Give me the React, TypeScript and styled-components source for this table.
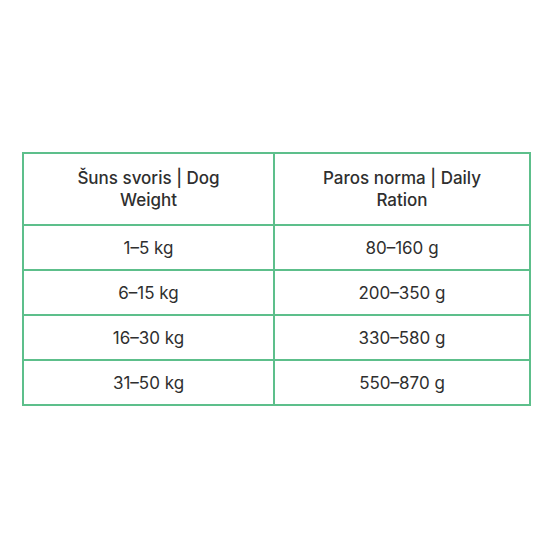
import React from "react";
import styled, { createGlobalStyle } from "styled-components";

const Global = createGlobalStyle`
  html, body { margin: 0; padding: 0; background: #ffffff; }
  body { font-family: Inter, "Noto Sans", sans-serif; color: #2f2f2f; }
`;

const Page = styled.div`
  width: 550px;
  height: 550px;
  box-sizing: border-box;
  padding: 152px 19px 0 22px;
`;

const Table = styled.table`
  width: 509px;
  border-collapse: collapse;
  table-layout: fixed;
  border: 2px solid #5dbf8b;
`;

const HeadCell = styled.th`
  border: 2px solid #5dbf8b;
  padding: 13px 40px;
  font-size: 17px;
  line-height: 22px;
  font-weight: 500;
  text-align: center;
  color: #2f2f2f;
`;

const Cell = styled.td`
  border: 2px solid #5dbf8b;
  padding: 10.5px 20px;
  font-size: 17px;
  line-height: 22px;
  font-weight: 400;
  text-align: center;
  color: #2f2f2f;
`;

const rows = [
  ["1–5 kg", "80–160 g"],
  ["6–15 kg", "200–350 g"],
  ["16–30 kg", "330–580 g"],
  ["31–50 kg", "550–870 g"],
];

export default function App() {
  return (
    <>
      <Global />
      <Page>
        <Table>
          <colgroup>
            <col style={{ width: "251px" }} />
            <col />
          </colgroup>
          <thead>
            <tr>
              <HeadCell>Šuns svoris | Dog Weight</HeadCell>
              <HeadCell>Paros norma | Daily Ration</HeadCell>
            </tr>
          </thead>
          <tbody>
            {rows.map(([w, r]) => (
              <tr key={w}>
                <Cell>{w}</Cell>
                <Cell>{r}</Cell>
              </tr>
            ))}
          </tbody>
        </Table>
      </Page>
    </>
  );
}
